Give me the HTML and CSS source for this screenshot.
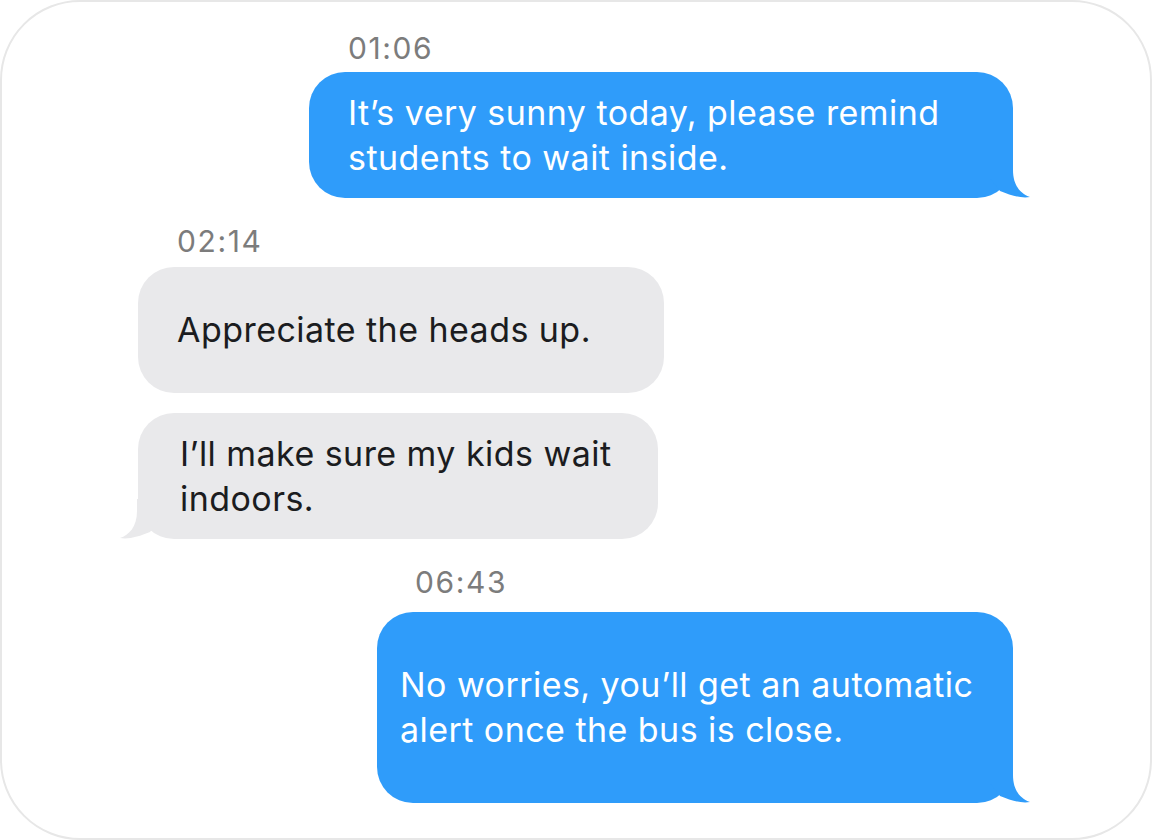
FILE: index.html
```html
<!DOCTYPE html>
<html lang="en">
<head>
<meta charset="utf-8">
<title>Messages</title>
<link rel="stylesheet" href="styles.css">
</head>
<body>
<main class="card">
  <section class="group group-out group-first">
    <div class="time">01:06</div>
    <div class="bubble bubble-out b1">It’s very sunny today, please remind<br>students to wait inside.
      <svg class="tail tail-out" viewBox="0 0 40 40" width="40" height="40" aria-hidden="true"><path d="M23 0 L23 12 C23 28 31 36 40 39 C31 40.5 21 37.5 10 33 L0 20 L0 0 Z"/></svg>
    </div>
  </section>

  <section class="group group-in">
    <div class="time">02:14</div>
    <div class="bubble bubble-in b2">Appreciate the heads up.</div>
    <div class="bubble bubble-in b3">I’ll make sure my kids wait<br>indoors.
      <svg class="tail tail-in" viewBox="0 0 40 40" width="40" height="40" aria-hidden="true"><path d="M23 0 L23 12 C23 28 31 36 40 39 C31 40.5 21 37.5 10 33 L0 20 L0 0 Z"/></svg>
    </div>
  </section>

  <section class="group group-out group-last">
    <div class="time">06:43</div>
    <div class="bubble bubble-out b4">No worries, you’ll get an automatic<br>alert once the bus is close.
      <svg class="tail tail-out" viewBox="0 0 40 40" width="40" height="40" aria-hidden="true"><path d="M23 0 L23 12 C23 28 31 36 40 39 C31 40.5 21 37.5 10 33 L0 20 L0 0 Z"/></svg>
    </div>
  </section>
</main>
</body>
</html>
```

FILE: styles.css
```css
* { box-sizing: border-box; }

html, body {
  margin: 0;
  padding: 0;
  background: #ffffff;
}

body {
  font-family: Inter, "Noto Sans", "Liberation Sans", sans-serif;
  width: 1152px;
  height: 840px;
  overflow: hidden;
}

.card {
  width: 1152px;
  height: 840px;
  border: 2px solid #e7e7e7;
  border-radius: 80px;
  background: #ffffff;
  padding: 29px 137px 0 136px;
  display: flex;
  flex-direction: column;
}

.group {
  display: flex;
  flex-direction: column;
}

.group-out { align-self: flex-end; }
.group-in { align-self: flex-start; margin-top: 26px; }
.group-last { margin-top: 26px; }

.time {
  font-size: 30px;
  line-height: 34px;
  color: #7c7c7c;
  padding-left: 39px;
  margin-bottom: 9px;
  letter-spacing: 1.6px;
}

.group-first .time { margin-bottom: 7px; }
.group-last .time { margin-bottom: 13px; padding-left: 38px; }

.bubble {
  position: relative;
  font-size: 34px;
  line-height: 45px;
  letter-spacing: 0.45px;
  border-radius: 36px;
  white-space: nowrap;
}

.bubble-out {
  background: #2f9cfa;
  color: #ffffff;
}

.bubble-in {
  background: #e9e9eb;
  color: #1b1c20;
}

.b1 { width: 704px; padding: 18px 20px 18px 39px; }
.b2 { width: 526px; padding: 40px 20px 41px 39px; }
.b3 { width: 520px; padding: 18px 20px 18px 42px; margin-top: 20px; }
.b4 { width: 636px; padding: 50px 20px 51px 23px; }

.tail {
  position: absolute;
  bottom: 0;
}

.tail-out {
  right: -17px;
  fill: #2f9cfa;
}

.tail-in {
  left: -18px;
  fill: #e9e9eb;
  transform: scaleX(-1);
}
```
